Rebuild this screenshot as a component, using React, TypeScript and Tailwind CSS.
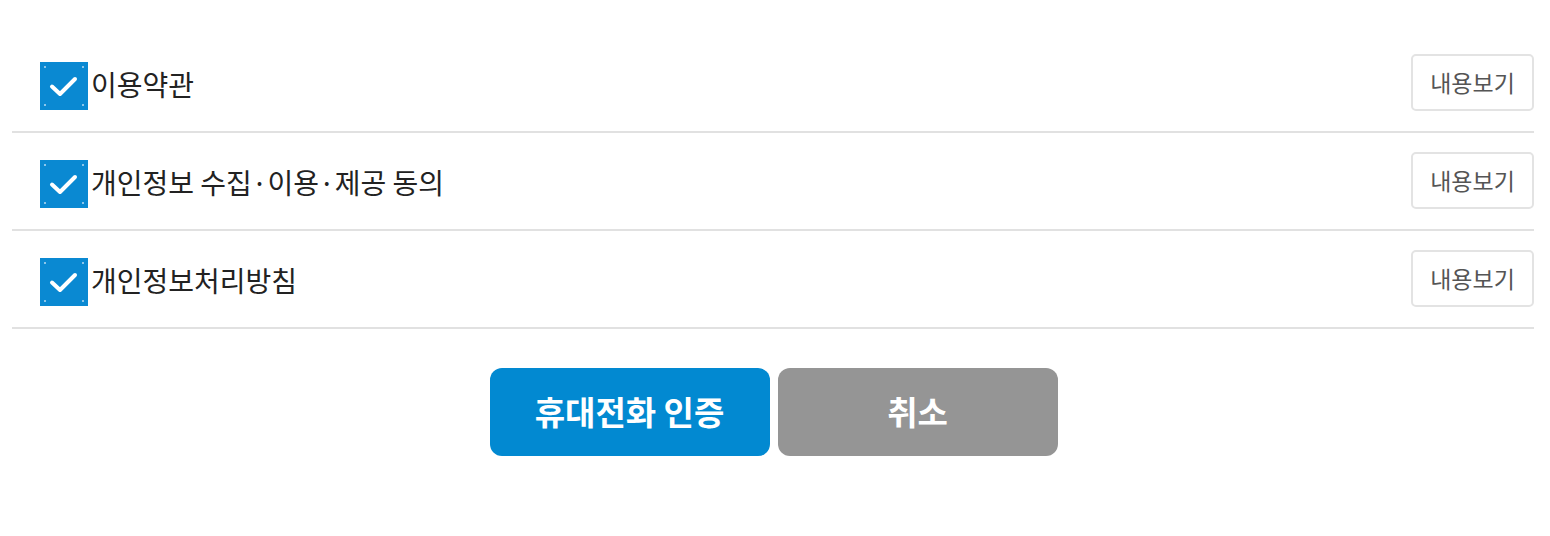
const terms = ['이용약관', '개인정보 수집·이용·제공 동의', '개인정보처리방침'];

const CheckBox = () => (
  <svg width="48" height="48" viewBox="0 0 48 48" className="shrink-0">
    <rect width="48" height="48" fill="#0a89d2" />
    {/* 모서리 점 */}
    <rect x="4" y="4" width="2" height="2" fill="#8cc6ea" />
    <rect x="42" y="4" width="2" height="2" fill="#8cc6ea" />
    <rect x="4" y="42" width="2" height="2" fill="#8cc6ea" />
    <rect x="42" y="42" width="2" height="2" fill="#8cc6ea" />
    <path
      d="M12 24.5 L20 32 L35 17"
      fill="none"
      stroke="#ffffff"
      strokeWidth="4"
      strokeLinecap="round"
      strokeLinejoin="round"
    />
  </svg>
);

const App = () => {
  return (
    <div
      className="w-full min-h-[536px] bg-white pt-[35px]"
      style={{ fontFamily: '"Noto Sans CJK KR", "Noto Sans", sans-serif' }}
    >
      {/* 약관 목록 */}
      <div className="ml-3 mr-4">
        {terms.map((t) => (
          <div
            key={t}
            className="h-[98px] flex items-center justify-between pl-[28px] border-b-2 border-[#e1e1e1]"
          >
            <div className="flex items-center mt-[5px]">
              <CheckBox />
              <span className="ml-[3px] text-[28px] text-[#222] leading-none -mt-[4px]">{t}</span>
            </div>
            <button className="w-[123px] h-[57px] border-2 border-[#e3e3e3] rounded-[5px] bg-white text-[23px] text-[#555] -mt-[2px]">
              내용보기
            </button>
          </div>
        ))}
      </div>

      {/* 하단 버튼 */}
      <div className="flex justify-center gap-2 mt-[39px] -ml-[3px]">
        <button className="w-[280px] h-[88px] rounded-[12px] bg-[#0289d1] text-white text-[33px] font-bold">
          휴대전화 인증
        </button>
        <button className="w-[280px] h-[88px] rounded-[12px] bg-[#959595] text-white text-[33px] font-bold">
          취소
        </button>
      </div>
    </div>
  );
};

export default App;
